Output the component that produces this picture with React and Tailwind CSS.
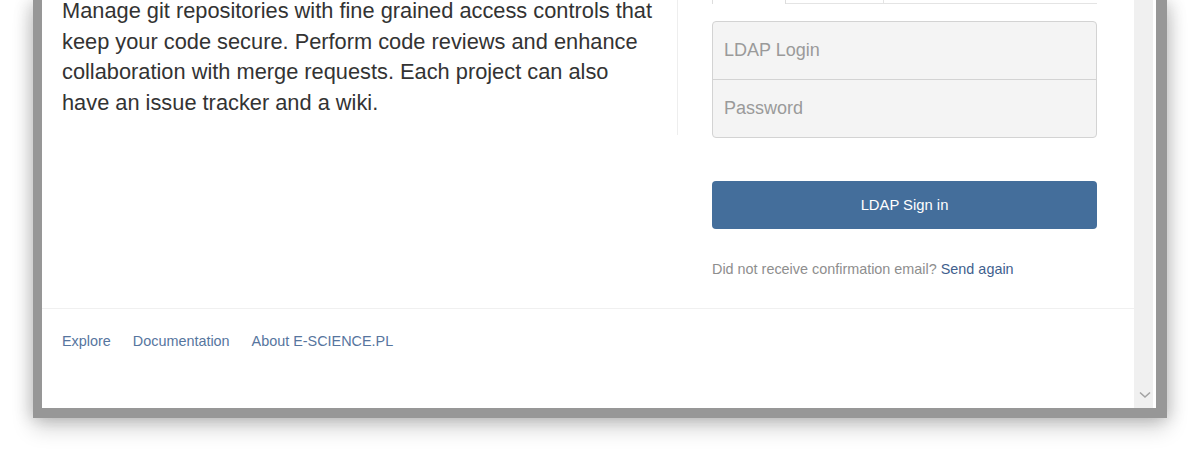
import React from 'react';

const font = { fontFamily: '"Liberation Sans", Arial, sans-serif' };

const Tabs = () => (
  <div className="flex h-[4px]">
    <div className="w-[74px] border-x border-[#ddd]" />
    <div className="w-[98px] border-b border-r border-[#e4e4e4]" />
    <div className="flex-1 border-b border-[#e4e4e4]" />
  </div>
);

const LoginForm = () => (
  <div className="flex flex-col">
    <Tabs />
    <div className="mt-[17px] flex flex-col rounded-[4px] border border-[#d3d3d3] bg-[#f4f4f4]">
      <input
        type="text"
        placeholder="LDAP Login"
        className="h-[58px] border-b border-[#d3d3d3] bg-transparent px-[11px] text-[18px] text-[#555] outline-none placeholder:text-[#9a9a9a]"
      />
      <input
        type="password"
        placeholder="Password"
        className="h-[57px] bg-transparent px-[11px] text-[18px] text-[#555] outline-none placeholder:text-[#9a9a9a]"
      />
    </div>
    <button className="mt-[43px] h-[48px] rounded-[4px] bg-[#446e9b] text-[14.8px] text-white">
      LDAP Sign in
    </button>
    <p className="mt-[30px] text-[14.4px] leading-[20px] text-[#8e8e8e]">
      Did not receive confirmation email?{' '}
      <a href="#" className="text-[#3f5f8e]">Send again</a>
    </p>
  </div>
);

const App = () => {
  return (
    <div className="h-[453px] overflow-hidden bg-white" style={font}>
      <div className="ml-[33px] flex h-[418px] w-[1134px] border-b-[10px] border-l-[9px] border-r-[11px] border-[#979797] bg-white shadow-[0_10px_20px_rgba(0,0,0,0.18),-6px_0_14px_rgba(0,0,0,0.1),6px_0_14px_rgba(0,0,0,0.1)]">
        <div className="flex flex-1 flex-col">
          <div className="flex h-[309px] border-b border-[#f0f0f0]">
            <div className="h-[135px] w-[636px] border-r border-[#eeeeee] pl-[20px]">
              <p className="-mt-[4px] text-[21.8px] leading-[30.7px] text-[#333]">
                Manage git repositories with fine grained access controls that
                <br />
                keep your code secure. Perform code reviews and enhance
                <br />
                collaboration with merge requests. Each project can also
                <br />
                have an issue tracker and a wiki.
              </p>
            </div>
            <div className="ml-[34px] w-[385px]">
              <LoginForm />
            </div>
          </div>
          <div className="flex gap-[22px] pl-[20px] pt-[22px] text-[14.4px] leading-[20px] text-[#56759e]">
            <a href="#">Explore</a>
            <a href="#">Documentation</a>
            <a href="#">About E-SCIENCE.PL</a>
          </div>
        </div>
        <div className="flex w-[22px] flex-col justify-end border-r-[3px] border-white bg-[#f0f0f0] pb-[7px]">
          <svg width="19" height="12" viewBox="0 0 19 12" className="ml-[1px]">
            <path d="M5 3.5 L10 8 L15 3.5" fill="none" stroke="#a3a3a3" strokeWidth="1.6" />
          </svg>
        </div>
      </div>
    </div>
  );
};

export default App;
